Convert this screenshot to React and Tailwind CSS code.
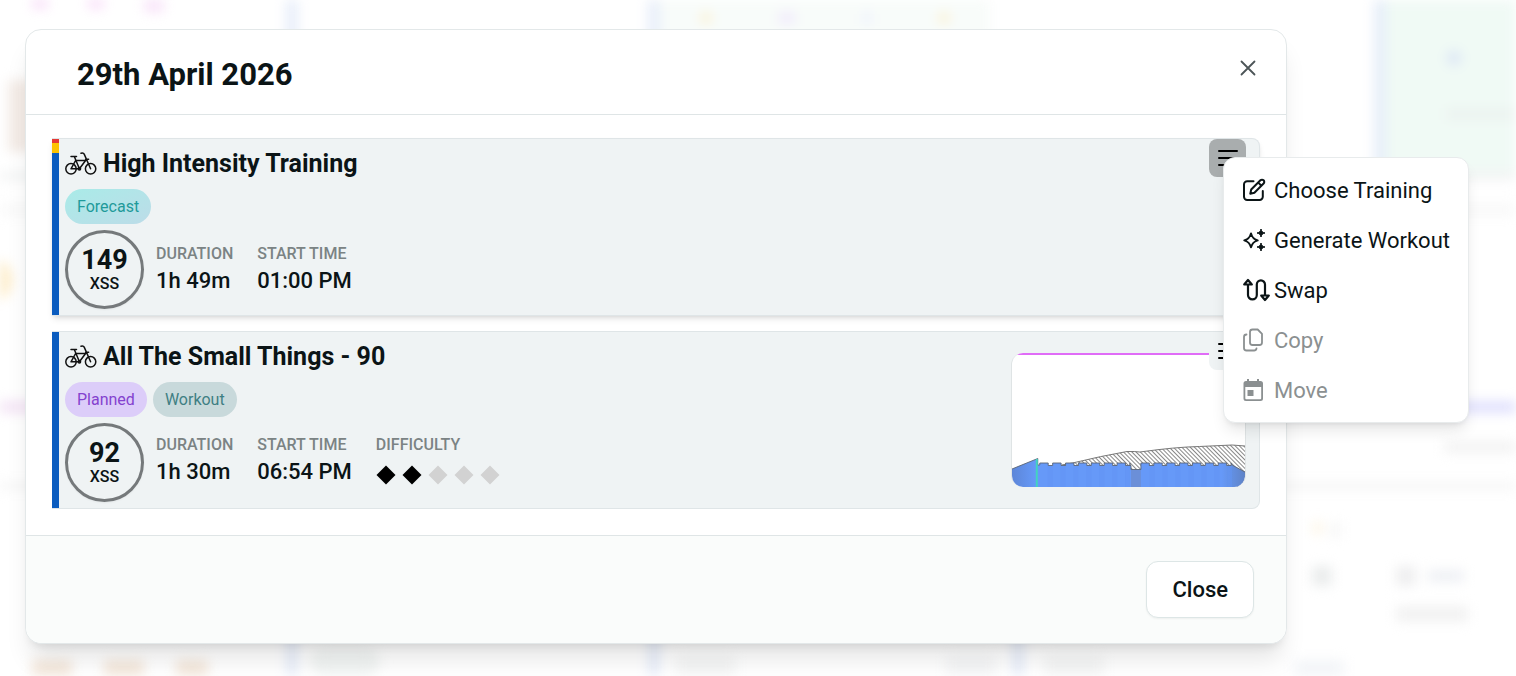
import { useState } from "react";

const activities = [
  {
    title: "High Intensity Training",
    tags: ["Forecast"],
    xss: 149,
    duration: "1h 49m",
    start: "01:00 PM",
  },
  {
    title: "All The Small Things - 90",
    tags: ["Planned", "Workout"],
    xss: 92,
    duration: "1h 30m",
    start: "06:54 PM",
    difficulty: 2,
    chart: true,
  },
];

const tagStyles = {
  Forecast: "bg-linear-to-br from-[#a9ebe8] to-[#bcdce8] text-[#1f9a9a]",
  Planned: "bg-[#dccdf9] text-[#8442cf]",
  Workout: "bg-[#c8d9db] text-[#3f7f83]",
};

function BikeIcon() {
  return (
    <svg className="h-8 w-8 shrink-0" viewBox="0 0 32 32" fill="none" stroke="#111" strokeWidth="1.5" strokeLinecap="round" strokeLinejoin="round" aria-hidden="true">
      <circle cx="6" cy="20.800" r="5.200" />
      <circle cx="25.600" cy="20.800" r="5.200" />
      <path d="M6 20.800 10.600 12.500H20.500M6 20.800H14.400L20.600 12.500M14.400 20.800 9.400 8.800M6 8.600h5.500M16 5.200c1.500-.5 2.600-.3 3.200.9l6.400 14.700M20.600 11.200h3" />
      <circle cx="14.400" cy="20.800" r="1.200" />
    </svg>
  );
}

function EditIcon() {
  return (
    <svg className="h-6 w-6" viewBox="0 0 24 24" fill="none" stroke="currentColor" strokeWidth="2" strokeLinecap="round" strokeLinejoin="round" aria-hidden="true">
      <path d="M11.500 3.200H5.200A3.200 3.200 0 0 0 2 6.400v12.400A3.200 3.200 0 0 0 5.200 22h12.400a3.200 3.200 0 0 0 3.200-3.200V13" />
      <path d="M8.300 15.700l.9-4.200 9.200-9.200a2.100 2.100 0 0 1 3.200 3.200l-9.200 9.200zM16.300 4.600l3.100 3.100" />
    </svg>
  );
}

function SparkIcon() {
  return (
    <svg className="h-6 w-6" viewBox="0 0 24 24" fill="currentColor" aria-hidden="true">
      <path d="M9 5.500c1.200 4.200 2.600 5.600 6.700 6.900C11.600 13.700 10.200 15.100 9 19.300 7.800 15.100 6.400 13.700 2.300 12.400 6.400 11.100 7.800 9.700 9 5.500z" fill="none" stroke="currentColor" strokeWidth="2" strokeLinejoin="round" />
      <path d="M19 1c.6 2.500 1.500 3.400 4 4-2.500.6-3.400 1.500-4 4-.6-2.500-1.500-3.400-4-4 2.500-.6 3.400-1.500 4-4zM19 15c.6 2.500 1.500 3.400 4 4-2.500.6-3.400 1.500-4 4-.6-2.500-1.500-3.400-4-4 2.500-.6 3.400-1.500 4-4z" stroke="currentColor" strokeWidth="1" strokeLinejoin="round" />
    </svg>
  );
}

function SwapIcon() {
  return (
    <svg className="h-6 w-7" viewBox="0 0 28 24" fill="none" stroke="currentColor" strokeWidth="2.200" strokeLinecap="round" strokeLinejoin="round" aria-hidden="true">
      <path d="M6 7v10a4.400 4.400 0 0 0 8.800 0V6.500a4.100 4.100 0 0 1 8.200 0V17" />
      <path d="M2.200 6.500 6 2l3.800 4.500zM19.200 17.500 23 22l3.800-4.500z" />
    </svg>
  );
}

function CopyIcon() {
  return (
    <svg className="h-6 w-6" viewBox="0 0 24 24" fill="none" stroke="currentColor" strokeWidth="1.800" strokeLinecap="round" strokeLinejoin="round" aria-hidden="true">
      <path d="M10.500 1.500h5.200l4.300 4.300v8.700a2.500 2.500 0 0 1-2.500 2.500h-7A2.500 2.500 0 0 1 8 14.500V4a2.500 2.500 0 0 1 2.500-2.500z" />
      <path d="M4.500 6.500A2.500 2.500 0 0 0 2 9v11a2.500 2.500 0 0 0 2.500 2.500H12a2.500 2.500 0 0 0 2.500-2" />
    </svg>
  );
}

function CalendarIcon() {
  return (
    <svg className="h-6 w-6" viewBox="0 0 24 24" fill="currentColor" aria-hidden="true">
      <path d="M18 3h-1V1h-2v2H7V1H5v2H4a2.500 2.500 0 0 0-2.500 2.500v15A2.500 2.500 0 0 0 4 23h14.500a2.500 2.500 0 0 0 2.500-2.500v-15A2.500 2.500 0 0 0 18.500 3zm.2 18.200H4.300a1 1 0 0 1-1-1V9h15.900v11.200a1 1 0 0 1-1 1zM5.500 12h6v6h-6z" />
    </svg>
  );
}

const menuItems = [
  { label: "Choose Training", Icon: EditIcon },
  { label: "Generate Workout", Icon: SparkIcon },
  { label: "Swap", Icon: SwapIcon },
  { label: "Copy", Icon: CopyIcon, disabled: true },
  { label: "Move", Icon: CalendarIcon, disabled: true },
];

function Menu() {
  return (
    <div role="menu" className="absolute top-[18px] left-[14px] z-20 flex flex-col rounded-xl border border-[#e8ebec] bg-white py-[7px] shadow-lg">
      {menuItems.map(({ label, Icon, disabled }) => (
        <button
          key={label}
          role="menuitem"
          disabled={disabled}
          className="flex h-[50px] items-center px-[18px] text-[22px] whitespace-nowrap text-[#0b1416] disabled:text-[#8b9091]"
        >
          <span className="flex w-8 shrink-0">
            <Icon />
          </span>
          {label}
        </button>
      ))}
    </div>
  );
}

// short intervals, each with a small dip after it
function steps(from, count) {
  let d = "";
  for (let i = 0; i < count; i++) {
    const x = from + i * 13;
    d += ` L${x} 110 H${x + 8.5} V112.500 H${x + 13} V110`;
  }
  return d;
}

function WorkoutChart() {
  const power = `M0 116 L26 105.500 V112 H28${steps(28, 7)} V112.500 H120 V116.500 H130 V110${steps(130, 7)} L222 112 L235 119`;
  const wBal = "M50 112 L61 110 Q90 103 116 98.500 Q124 98.300 129 99 Q165 94 189 93.500 L222 92 L235 93";
  return (
    <svg className="h-[134px] w-[235px] overflow-hidden rounded-xl border-x border-[#dfe4e5] bg-white" viewBox="0 0 235 134" preserveAspectRatio="none" role="img" aria-label="Workout profile">
      <defs>
        <pattern id="hatch" width="3" height="3" patternUnits="userSpaceOnUse" patternTransform="rotate(-45)">
          <rect width="3" height="3" fill="#fff" />
          <rect width="1" height="3" fill="#888" />
        </pattern>
        <linearGradient id="power" x1="0" x2="1" y1="0" y2="0">
          <stop offset="0" stopColor="#5d86d8" />
          <stop offset=".1" stopColor="#6699f8" />
          <stop offset=".9" stopColor="#6699f8" />
          <stop offset="1" stopColor="#5f83c6" />
        </linearGradient>
      </defs>
      <path d={`${wBal} V134 H50 Z`} fill="url(#hatch)" />
      <path d={wBal} fill="none" stroke="#777" />
      <path d={`${power} V134 H0 Z`} fill="url(#power)" />
      <path d={power} fill="none" stroke="#5c6675" strokeWidth=".9" />
      {[36, 49, 62, 75, 88, 101, 114, 139, 152, 165, 178, 191, 204, 217].map((x) => (
        <rect key={x} x={x} y="113" width="5" height="21" fill="#6293f4" opacity=".5" />
      ))}
      <rect x="120" y="117" width="10" height="17" fill="#6b8fd8" />
      <rect x="24" y="106" width="2" height="28" fill="#43d3c0" />
      <rect width="235" height="2" fill="#e06cf7" />
    </svg>
  );
}

function Stat({ label, children }) {
  return (
    <div>
      <div className="text-base leading-6 font-medium text-[#7b8384] uppercase">{label}</div>
      <div className="text-[22px] leading-[30px] font-medium">{children}</div>
    </div>
  );
}

function ActivityCard({ activity, open, onToggle }) {
  return (
    <article className={`relative flex rounded-r-lg border border-l-0 border-[#dfe5e7] bg-[#eff3f4] ${open ? "z-10 shadow-md" : ""}`}>
      <div className="flex w-[7px] shrink-0 flex-col bg-[#0b5cbf]">
        {open && (
          <>
            <div className="h-1 bg-[#e53935]" />
            <div className="h-[10px] bg-[#fdc300]" />
          </>
        )}
      </div>
      <div className="min-w-0 flex-1 py-[6px] pl-[6px]">
        <h2 className="flex h-[38px] items-center gap-[6px] text-[25px] font-bold">
          <BikeIcon />
          {activity.title}
        </h2>
        <div className="mt-[6px] flex gap-[6px]">
          {activity.tags.map((tag) => (
            <span key={tag} className={`flex h-[35px] items-center rounded-full px-3 text-base ${tagStyles[tag]}`}>
              {tag}
            </span>
          ))}
        </div>
        <div className="mt-[6px] flex items-start gap-3">
          <div className="flex size-[79px] shrink-0 flex-col items-center justify-center rounded-full border-3 border-[#75797b] shadow-xs">
            <span className="text-[27px] leading-7 font-bold">{activity.xss}</span>
            <span className="text-base leading-5 font-medium">XSS</span>
          </div>
          <div className={`flex gap-6 ${activity.difficulty ? "pt-[10px]" : "pt-3"}`}>
            <Stat label="Duration">{activity.duration}</Stat>
            <Stat label="Start Time">{activity.start}</Stat>
            {activity.difficulty && (
              <Stat label="Difficulty">
                <span className="flex gap-[6px] pt-2" role="img" aria-label={`${activity.difficulty} of 5`}>
                  {[1, 2, 3, 4, 5].map((n) => (
                    <svg key={n} className="size-5" viewBox="0 0 20 20" aria-hidden="true">
                      <path d="M10 0.500 19.500 10 10 19.500 0.500 10z" fill={n <= activity.difficulty ? "#000" : "#d2d2d2"} />
                    </svg>
                  ))}
                </span>
              </Stat>
            )}
          </div>
        </div>
      </div>
      {activity.chart && (
        <div className="flex items-end pr-[13px] pb-[21px]">
          <WorkoutChart />
        </div>
      )}
      <div className="absolute top-0 right-[13px]">
        <button
          aria-label="Activity menu"
          aria-expanded={open}
          onClick={onToggle}
          className={`flex h-[38px] w-[37px] items-center justify-center rounded-lg ${open ? "bg-[#a9adae]" : "bg-[#eff3f4]"}`}
        >
          <svg className="size-5" viewBox="0 0 20 20" stroke="#000" strokeWidth="2" strokeLinecap="round" aria-hidden="true">
            <path d="M1 3h18M1 10h18M1 17h11" />
          </svg>
        </button>
        {open && <Menu />}
      </div>
    </article>
  );
}

// the calendar page behind the dialog, out of focus
function Backdrop() {
  return (
    <div className="absolute inset-0 flex flex-col overflow-hidden blur-[6px]" aria-hidden="true">
      <div className="grid h-[172px] shrink-0 grid-cols-[286px_362px_726px_1fr]">
        <div className="flex flex-col justify-between pb-5">
          <div className="flex gap-10 pl-8">
            <div className="h-2 w-4 bg-[#f8d9f8]" />
            <div className="h-2 w-4 bg-[#f8d9f8]" />
            <div className="h-3 w-5 bg-[#f8e3f9]" />
          </div>
          <div className="ml-2 h-[72px] w-6 bg-[#f3ebe6]" />
        </div>
        <div className="border-l-12 border-[#e8eefa]" />
        <div className="border-l-12 border-[#e8eefa]">
          <div className="flex h-10 w-[330px] items-start justify-between bg-[#f8fcfa] px-10 pt-3">
            <div className="size-3 rounded-full bg-[#fbf2d5]" />
            <div className="h-3 w-4 bg-[#f1ebfb]" />
            <div className="h-3 w-2 bg-[#edf0fc]" />
            <div className="size-3 rounded-full bg-[#fbf2d5]" />
          </div>
        </div>
        <div className="flex flex-col justify-between border-l-12 border-[#e6eef9] bg-[#f0faf5] pt-[50px] pb-[52px] pl-[60px]">
          <div className="size-4 rounded-full bg-[#dfe9f5]" />
          <div className="h-3 bg-[#ecf3f0]" />
        </div>
      </div>
      <div className="h-2 shrink-0 bg-[#f2f3f3]" />
      <div className="flex h-[221px] shrink-0 flex-col gap-10 pt-6">
        <div className="h-3 shrink-0 bg-[#f9f9f9]" />
        <div className="-ml-9 size-12 rounded-full bg-[#fdecc8]" />
      </div>
      <div className="flex shrink-0 justify-between">
        <div className="h-3 w-12 bg-[#f3e4f5]" />
        <div className="h-3 w-[240px] bg-[#e0e0fd]" />
      </div>
      <div className="flex h-[69px] shrink-0 justify-end pt-7">
        <div className="h-3 w-[72px] bg-[#f3f3f3]" />
      </div>
      <div className="h-2 shrink-0 bg-[#f6f6f6]" />
      <div className="flex shrink-0 justify-end gap-14 pt-8 pr-12">
        <div className="flex w-7 flex-col gap-7">
          <div className="flex gap-2">
            <div className="h-3 w-4 bg-[#fdf6e8]" />
            <div className="h-4 w-3 bg-[#f5f5f5]" />
          </div>
          <div className="size-5 bg-[#ebeded]" />
        </div>
        <div className="flex w-[72px] flex-col gap-5 pt-11">
          <div className="flex items-center gap-3">
            <div className="size-5 bg-[#efeff0]" />
            <div className="h-3 w-9 bg-[#eef0f4]" />
          </div>
          <div className="h-4 bg-[#f2f2f2]" />
        </div>
      </div>
      <div className="grid flex-1 grid-cols-[286px_362px_364px_1fr]">
        <div className="flex items-end gap-8 pl-8">
          <div className="h-4 w-10 bg-[#f4e8dc]" />
          <div className="h-4 w-10 bg-[#f4e8dc]" />
          <div className="h-4 w-8 bg-[#f4e8dc]" />
        </div>
        <div className="flex items-end border-l-12 border-[#e8eefa] pl-3">
          <div className="h-7 w-[70px] rounded-full bg-[#f2f5f4]" />
        </div>
        <div className="flex items-end justify-between border-l-12 border-[#e8eefa] px-4">
          <div className="h-5 w-[60px] bg-[#f5f6f6]" />
          <div className="h-5 w-[50px] bg-[#f5f6f7]" />
        </div>
        <div className="flex items-end gap-[190px] border-l-12 border-[#e8eefa] pl-5">
          <div className="h-5 w-[60px] bg-[#f5f6f6]" />
          <div className="h-4 w-[50px] bg-[#f3f5f8]" />
        </div>
      </div>
    </div>
  );
}

export default function App() {
  const [openMenu, setOpenMenu] = useState(0);

  return (
    <div className="relative min-h-screen overflow-hidden bg-white pt-[29px] pr-[229px] pb-8 pl-[25px] font-['Roboto',sans-serif] text-[#0b1416]">
      <Backdrop />
      <div role="dialog" aria-labelledby="dialog-title" className="relative rounded-2xl border border-[#e3e8e9] bg-white shadow-xl">
        <header className="flex items-start justify-between border-b border-[#dfe5e6] pt-6 pr-6 pb-[18px] pl-[51px]">
          <h1 id="dialog-title" className="text-[31px] leading-[42px] font-bold">29th April 2026</h1>
          <button aria-label="Close dialog" className="flex size-7 items-center justify-center">
            <svg className="size-4" viewBox="0 0 16 16" stroke="#4c5557" strokeWidth="1.800" strokeLinecap="round" aria-hidden="true">
              <path d="M1.500 1.500l13 13M14.500 1.500l-13 13" />
            </svg>
          </button>
        </header>
        <div className="flex flex-col gap-[15px] px-[26px] pt-[23px] pb-[26px]">
          {activities.map((activity, i) => (
            <ActivityCard
              key={activity.title}
              activity={activity}
              open={openMenu === i}
              onToggle={() => setOpenMenu(openMenu === i ? null : i)}
            />
          ))}
        </div>
        <footer className="flex justify-end rounded-b-2xl border-t border-[#dfe5e6] bg-[#fafcfb] px-8 py-[25px]">
          <button className="h-[57px] rounded-xl border border-[#dde6e6] bg-white px-[25px] text-[22px] font-medium shadow-xs">Close</button>
        </footer>
      </div>
    </div>
  );
}
